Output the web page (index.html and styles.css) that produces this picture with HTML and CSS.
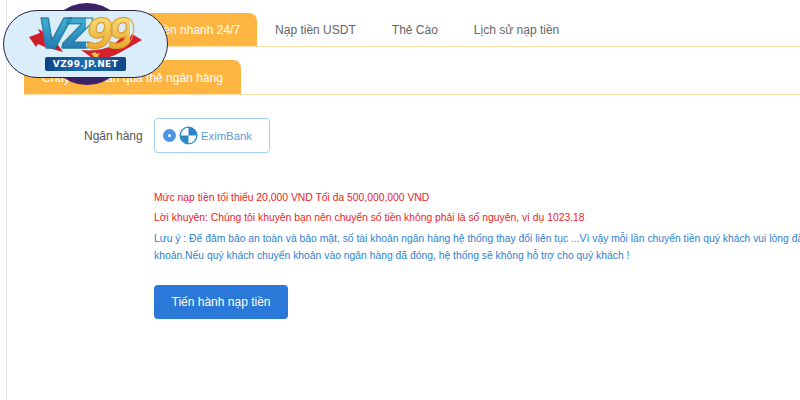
FILE: index.html
```html
<!DOCTYPE html>
<html lang="en">
<head>
  <meta charset="UTF-8">
  <title>Nạp tiền</title>
  <link rel="stylesheet" href="styles.css">
</head>
<body>
  <!-- Logo lies over the tabs -->
  <div class="logo">
    <div class="logo-disc"></div>
    <div class="logo-pill"></div>
    <svg class="logo-ribbon" width="120" height="36" viewBox="0 0 120 36">
      <path d="M0 10 L11 6 L9 2 L22 8 L34 25 L16 20 L9 17 L7 20 Z" fill="#cf1f2b"/>
      <path d="M52 23 L66 33 Q82 31 92 25 L113 13 L103 7 L100 12 L94 9 L84 18 Q72 25 52 23 Z" fill="#d3212d"/>
      <path d="M62 27 L66 25 L68 27 L71 26 L69 29 L70 31 L67 30 L64 31 L65 29 Z" fill="#f3c24c"/>
    </svg>
    <div class="logo-name"><span class="logo-vz">VZ</span><span class="logo-99">99</span></div>
    <div class="logo-url">VZ99.JP.NET</div>
  </div>

  <div class="page">
    <!-- Main tabs -->
    <div class="tabs">
      <div class="tab active">Nạp tiền nhanh 24/7</div>
      <div class="tab">Nạp tiền USDT</div>
      <div class="tab">Thẻ Cào</div>
      <div class="tab">Lịch sử nạp tiền</div>
    </div>

    <!-- Sub tabs -->
    <div class="subtabs">
      <div class="subtab">Chuyển khoản qua thẻ ngân hàng</div>
    </div>

    <!-- Bank -->
    <div class="bank-row">
      <div class="bank-label">Ngân hàng</div>
      <div class="bank-option">
        <span class="radio"></span>
        <svg class="bank-icon" width="19" height="19" viewBox="0 0 19 19">
          <circle cx="9.5" cy="9.5" r="9" fill="#2b88c8"/>
          <path d="M9.5 1.8 A7.7 7.7 0 0 0 1.8 9.5 H9.5 Z" fill="#fff"/>
          <path d="M9.5 17.2 A7.7 7.7 0 0 0 17.2 9.5 H9.5 Z" fill="#fff"/>
        </svg>
        <span class="bank-name">EximBank</span>
      </div>
    </div>

    <!-- Notes -->
    <div class="notes">
      <p class="note-red">Mức nạp tiền tối thiểu 20,000 VND Tối đa 500,000,000 VND</p>
      <p class="note-red">Lời khuyên: Chúng tôi khuyên bạn nên chuyển số tiền không phải là số nguyên, ví dụ 1023.18</p>
      <p class="note-blue">Lưu ý : Để đảm bảo an toàn và bảo mật, số tài khoản ngân hàng hệ thống thay đổi liên tục ...Vì vậy mỗi lần chuyển tiền quý khách vui lòng đăng nhập để xem số tài<br>khoản.Nếu quý khách chuyển khoản vào ngân hàng đã đóng, hệ thống sẽ không hỗ trợ cho quý khách !</p>
    </div>

    <button class="submit">Tiến hành nạp tiền</button>
  </div>
</body>
</html>
```

FILE: styles.css
```css
/* General */
html, body {
  height: 100%;
}

body {
  margin: 0;
  font-family: "Liberation Sans", Arial, sans-serif;
  background-color: #fff;
  color: #555;
  overflow: hidden;
}

.page {
  margin-left: 6px;
  height: 100%;
  border-left: 1px solid #e6e6e6;
}

/* Main tabs */
.tabs {
  display: flex;
  padding: 13px 0 0 108px;
  border-bottom: 1px solid #fbdca4;
}

.tab {
  height: 33px;
  padding: 0 18px;
  font-size: 12px;
  line-height: 34px;
  color: #666;
}

.tab.active {
  padding: 0 17px;
  background-color: #fdb541;
  border-radius: 0 8px 0 0;
  color: #fff;
}

/* Sub tabs */
.subtabs {
  display: flex;
  margin: 13px 0 0 17px;
  border-bottom: 1px solid #fbdca4;
}

.subtab {
  height: 34px;
  padding: 0 18px;
  background-color: #fdb541;
  border-radius: 0 8px 0 0;
  color: #fff;
  font-size: 12px;
  line-height: 36px;
}

/* Bank row */
.bank-row {
  display: flex;
  align-items: center;
  margin: 23px 0 0 77px;
}

.bank-label {
  width: 70px;
  font-size: 12px;
  color: #555;
}

.bank-option {
  display: flex;
  align-items: center;
  box-sizing: border-box;
  width: 116px;
  height: 35px;
  padding-left: 8px;
  border: 1px solid #a3d0f2;
  border-radius: 4px;
}

.radio {
  box-sizing: border-box;
  width: 13px;
  height: 13px;
  border: 5px solid #4a94e4;
  border-radius: 50%;
  background-color: #fff;
}

.bank-icon {
  margin-left: 3px;
}

.bank-name {
  margin-left: 3px;
  font-size: 11.3px;
  color: #5a9bd8;
}

/* Notes */
.notes {
  margin: 35px 0 0 147px;
  font-size: 10.35px;
  white-space: nowrap;
}

.notes p {
  margin: 0;
}

.note-red {
  line-height: 20px;
  color: #ea2226;
}

.notes .note-blue {
  margin-top: 2px;
  line-height: 17px;
  color: #2f7fd1;
}

/* Button */
.submit {
  display: block;
  width: 134px;
  height: 34px;
  margin: 21px 0 0 147px;
  padding: 0;
  background-color: #2a78d8;
  border: none;
  border-radius: 4px;
  color: #fff;
  font-family: inherit;
  font-size: 12px;
}

/* Logo */
.logo {
  position: absolute;
  left: 3px;
  top: 3px;
  width: 165px;
  height: 82px;
}

.logo-disc {
  position: absolute;
  left: 43px;
  top: 0;
  width: 82px;
  height: 82px;
  border-radius: 50%;
  background-color: #3a2168;
}

.logo-pill {
  position: absolute;
  left: 0;
  top: 7px;
  width: 163px;
  height: 66px;
  border: 1px solid #2a2440;
  border-radius: 34px;
  background-color: #d9edfb;
}

.logo-ribbon {
  position: absolute;
  left: 26px;
  top: 24px;
}

.logo-name {
  position: absolute;
  left: 35px;
  top: 8px;
  font-family: "DejaVu Sans", sans-serif;
  font-size: 40px;
  line-height: 46px;
  font-weight: bold;
  font-style: italic;
  letter-spacing: -6px;
  white-space: nowrap;
}

.logo-vz {
  background: linear-gradient(#46bcd8, #1d6fa6);
  -webkit-background-clip: text;
  background-clip: text;
  color: transparent;
  -webkit-text-stroke: 1px #1f7aa8;
}

.logo-99 {
  background: linear-gradient(#ffe583, #e29c1f);
  -webkit-background-clip: text;
  background-clip: text;
  color: transparent;
  -webkit-text-stroke: 1px #dc9a2c;
}

.logo-url {
  position: absolute;
  left: 42px;
  top: 54px;
  width: 81px;
  height: 14px;
  background: linear-gradient(90deg, #0f4486, #1c6fb4 50%, #0f4486);
  border-radius: 2px;
  color: #fff;
  font-family: "DejaVu Sans", sans-serif;
  font-size: 9px;
  font-weight: bold;
  line-height: 14px;
  letter-spacing: 0.4px;
  text-align: center;
  white-space: nowrap;
}
```
